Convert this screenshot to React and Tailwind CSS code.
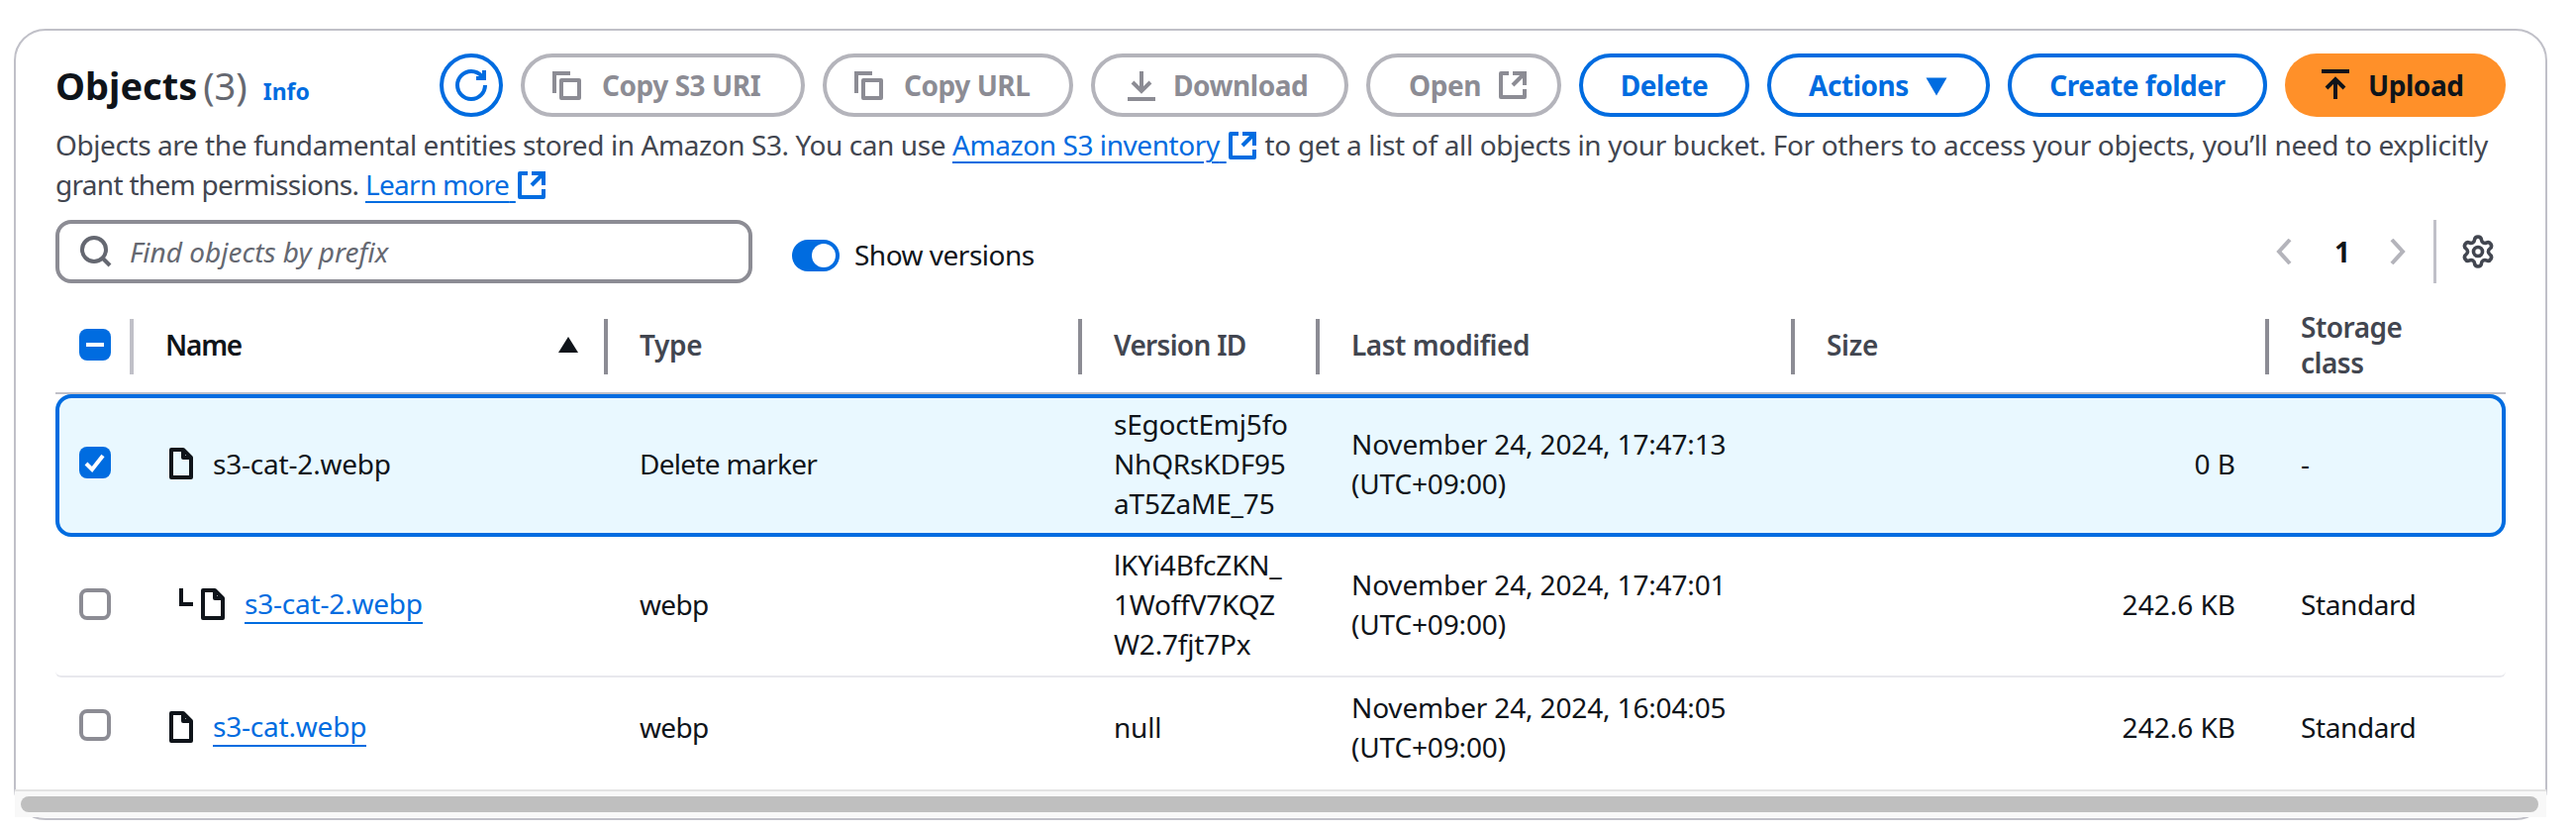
import { Settings } from "lucide-react";

const columns = "grid grid-cols-[75px_479px_479px_240px_480px_479px_244px]";

const Icon = ({ children, className = "" }) => (
  <svg
    viewBox="0 0 16 16"
    fill="none"
    stroke="currentColor"
    strokeWidth="2"
    className={`h-8 w-8 shrink-0 ${className}`}
  >
    {children}
  </svg>
);

const CopyIcon = (props) => (
  <Icon {...props}>
    <path d="M2 12V2h8" />
    <path d="M5.5 5.5h9v9h-9z" strokeLinejoin="round" />
  </Icon>
);

const ExternalIcon = (props) => (
  <Icon {...props}>
    <path d="M14 8V2H8" />
    <path d="M14 2 8 8" />
    <path d="M6 2H2v12h12v-4" strokeLinejoin="round" />
  </Icon>
);

const FileIcon = (props) => (
  <Icon {...props}>
    <path d="M9 1H3v14h10V5L9 1Z" strokeLinejoin="round" />
    <path d="M9 1v4h4" strokeLinejoin="round" />
  </Icon>
);

const Button = ({ children, disabled, className = "" }) => (
  <button
    className={`flex h-16 items-center rounded-full border-4 bg-white text-[28px] leading-10 font-bold tracking-[-0.45px] ${
      disabled
        ? "border-[#b4b4bb] text-[#8c8c94]"
        : "border-[#006ce0] text-[#006ce0]"
    } ${className}`}
  >
    {children}
  </button>
);

const Checkbox = ({ state, className = "" }) => {
  if (state === "empty") {
    return (
      <div
        className={`h-8 w-8 rounded-lg border-4 border-[#8c8c94] bg-white ${className}`}
      />
    );
  }

  return (
    <div
      className={`flex h-8 w-8 items-center justify-center rounded-lg bg-[#006ce0] ${className}`}
    >
      {state === "mixed" ? (
        <div className="h-1 w-[18px] bg-white" />
      ) : (
        <svg viewBox="0 0 16 16" className="h-8 w-8" fill="none" stroke="white" strokeWidth="2">
          <path d="M3.5 8.5 6.5 11.5 12 4.5" />
        </svg>
      )}
    </div>
  );
};

const HeaderCell = ({ children, className = "tracking-[-0.3px]" }) => (
  <div className="flex items-center">
    <div className="h-14 w-1 shrink-0 bg-[#8c8c94]" />
    <div className={`flex-1 pb-1 pl-8 text-[28px] leading-9 font-semibold text-[#424650] ${className}`}>
      {children}
    </div>
  </div>
);

const Row = ({ row, className = "", bodyClass = "pb-1" }) => (
  <div className={`${columns} text-[28px] leading-10 text-[#0f141a] ${className}`}>
    <div className="pl-6">
      <Checkbox state={row.checked ? "checked" : "empty"} className={row.checkOffset} />
    </div>
    <div className={`flex items-center pl-9 tracking-[-0.2px] ${bodyClass}`}>
      {row.nested && (
        <svg viewBox="0 0 14 18" className="mb-3.5 ml-3.5 mr-1 h-[18px] w-[14px] shrink-0" fill="none" stroke="currentColor" strokeWidth="4">
          <path d="M2 0v16h12" />
        </svg>
      )}
      <FileIcon />
      {row.link ? (
        <a className="ml-4 border-b-2 border-[#006ce0] leading-[38px] text-[#006ce0]">{row.name}</a>
      ) : (
        <span className="ml-4">{row.name}</span>
      )}
    </div>
    <div className={`flex items-center pl-9 tracking-[-0.7px] ${bodyClass}`}>{row.type}</div>
    <div className={`flex items-center pl-9 tracking-[-0.2px] ${bodyClass}`}>
      <div>
        {row.version.map((line) => (
          <div key={line}>{line}</div>
        ))}
      </div>
    </div>
    <div className={`flex items-center pl-9 tracking-[-0.15px] ${bodyClass}`}>
      <div>
        {row.modified}
        <br />
        (UTC+09:00)
      </div>
    </div>
    <div className={`flex items-center justify-end pr-[30px] ${bodyClass}`}>{row.size}</div>
    <div className={`flex items-center pl-9 tracking-[-0.4px] ${bodyClass}`}>{row.storage}</div>
  </div>
);

const rows = [
  {
    name: "s3-cat-2.webp",
    checked: true,
    checkOffset: "mt-[53px]",
    type: "Delete marker",
    version: ["sEgoctEmj5fo", "NhQRsKDF95", "aT5ZaME_75"],
    modified: "November 24, 2024, 17:47:13",
    size: "0 B",
    storage: "-",
  },
  {
    name: "s3-cat-2.webp",
    link: true,
    nested: true,
    checkOffset: "mt-[52px]",
    type: "webp",
    version: ["lKYi4BfcZKN_", "1WoffV7KQZ", "W2.7fjt7Px"],
    modified: "November 24, 2024, 17:47:01",
    size: "242.6 KB",
    storage: "Standard",
  },
  {
    name: "s3-cat.webp",
    link: true,
    checkOffset: "mt-8",
    type: "webp",
    version: ["null"],
    modified: "November 24, 2024, 16:04:05",
    size: "242.6 KB",
    storage: "Standard",
  },
];

export default function App() {
  return (
    <div className="min-h-[840px] bg-white pt-[29px] pl-[14px] pr-[29px] font-['Noto_Sans',sans-serif]">
      <div className="relative h-[799px] rounded-[32px] border-2 border-[#c0c0c8] px-10 pt-[23px]">
        <div className="flex items-center justify-between">
          <div className="flex items-baseline">
            <h1 className="text-[38px] leading-[48px] font-bold text-[#0f141a]">
              Objects <span className="-ml-1 font-normal text-[#656871]">(3)</span>
            </h1>
            <a className="ml-4 text-[23px] font-bold text-[#006ce0]">Info</a>
          </div>
          <div className="flex items-center gap-[18px]">
            <button className="flex h-16 w-16 items-center justify-center rounded-full border-4 border-[#006ce0] text-[#006ce0]">
              <Icon>
                <path d="M15 8c0 3.87-3.13 7-7 7s-7-3.13-7-7 3.13-7 7-7c2.22 0 4.2 1.03 5.48 2.64" />
                <path d="M14.5.5v4H10.5" />
              </Icon>
            </button>
            <Button disabled className="w-[287px] pl-[26px]">
              <CopyIcon className="mr-5" />
              Copy S3 URI
            </Button>
            <Button disabled className="w-[253px] pl-[26px]">
              <CopyIcon className="mr-5" />
              Copy URL
            </Button>
            <Button disabled className="w-[260px] pl-[31px]">
              <Icon className="mr-4">
                <path d="M8 1v10" />
                <path d="M3.5 6.5 8 11l4.5-4.5" />
                <path d="M1 15h14" />
              </Icon>
              Download
            </Button>
            <Button disabled className="w-[197px] pl-[39px]">
              Open
              <ExternalIcon className="ml-4" />
            </Button>
            <Button className="w-[172px] justify-center">Delete</Button>
            <Button className="w-[225px] justify-center">
              Actions
              <svg viewBox="0 0 16 16" className="ml-4 h-6 w-6" fill="currentColor">
                <path d="M1 3h14L8 15Z" />
              </svg>
            </Button>
            <Button className="w-[262px] justify-center">Create folder</Button>
            <button className="flex h-16 w-[223px] items-center rounded-full bg-[#ff9029] pl-[35px] text-[28px] leading-10 font-bold tracking-[-0.45px] text-[#0f141a]">
              <Icon className="mr-[17px]">
                <path d="M1 1h14" />
                <path d="M8 15V5" />
                <path d="M3.5 9.5 8 5l4.5 4.5" />
              </Icon>
              Upload
            </button>
          </div>
        </div>

        <p className="mt-2 text-[28px] leading-10 tracking-[-0.42px] text-[#424650]">
          Objects are the fundamental entities stored in Amazon S3. You can use{" "}
          <a className="text-[#006ce0] underline decoration-2 underline-offset-[6px]">
            Amazon S3 inventory{" "}
          </a>
          <ExternalIcon className="inline-block align-[-6px] text-[#006ce0]" />{" "}
          <span className="tracking-[-0.34px]">
            to get a list of all objects in your bucket. For others to access your objects, you’ll
            need to explicitly
          </span>{" "}
          <span className="tracking-[-0.7px]">grant them permissions. </span>
          <a className="tracking-[-0.7px] text-[#006ce0] underline decoration-2 underline-offset-[6px]">
            Learn more{" "}
          </a>
          <ExternalIcon className="inline-block align-[-6px] text-[#006ce0]" />
        </p>

        <div className="mt-4 flex items-center justify-between">
          <div className="flex items-center">
            <div className="flex h-16 w-[704px] items-center rounded-2xl border-4 border-[#8c8c94] bg-white pl-[21px]">
              <svg viewBox="0 0 16 16" className="h-8 w-8" fill="none" stroke="#656871" strokeWidth="2">
                <circle cx="7" cy="7" r="6" />
                <path d="m11.5 11.5 3.5 3.5" />
              </svg>
              <span className="ml-[18px] text-[28px] text-[#656871] italic">
                Find objects by prefix
              </span>
            </div>
            <div className="mt-2 ml-10 flex items-center">
              <div className="flex h-8 w-12 items-center justify-end rounded-full bg-[#006ce0] pr-1">
                <div className="h-6 w-6 rounded-full bg-white" />
              </div>
              <span className="ml-[15px] pb-0.5 text-[28px] leading-10 tracking-[-0.5px] text-[#0f141a]">
                Show versions
              </span>
            </div>
          </div>
          <div className="flex items-center pr-2.5">
            <svg viewBox="0 0 16 26" className="h-[26px] w-4" fill="none" stroke="#b4b4bb" strokeWidth="4">
              <path d="M14 1 3 13l11 12" />
            </svg>
            <span className="ml-[43px] mr-10 text-[28px] font-bold text-[#0f141a]">1</span>
            <svg viewBox="0 0 16 26" className="h-[26px] w-4" fill="none" stroke="#b4b4bb" strokeWidth="4">
              <path d="M2 1l11 12L2 25" />
            </svg>
            <div className="ml-7 h-16 w-[3px] bg-[#c0c0c8]" />
            <Settings className="ml-6 h-9 w-9 text-[#424650]" strokeWidth={2.4} />
          </div>
        </div>

        <div className={`${columns} mt-4 h-24 border-b-2 border-[#c0c0c8] pt-0.5`}>
          <div className="flex items-center pl-6">
            <Checkbox state="mixed" className="-mt-1" />
          </div>
          <div className="flex items-center">
            <div className="h-14 w-1 shrink-0 bg-[#c0c0c8]" />
            <div className="flex flex-1 items-center justify-between pb-1 pl-8 pr-[26px] text-[28px] leading-9 font-semibold tracking-[-1.2px] text-[#0f141a]">
              Name
              <svg viewBox="0 0 20 16" className="h-4 w-5" fill="#0f141a">
                <path d="M10 0 20 16H0Z" />
              </svg>
            </div>
          </div>
          <HeaderCell>Type</HeaderCell>
          <HeaderCell className="tracking-[-0.7px]">Version ID</HeaderCell>
          <HeaderCell className="tracking-[-0.45px]">Last modified</HeaderCell>
          <HeaderCell>Size</HeaderCell>
          <HeaderCell className="tracking-[-0.5px]">
            Storage
            <br />
            class
          </HeaderCell>
        </div>

        <Row row={rows[0]} className="h-36 rounded-2xl bg-[#e9f8ff] shadow-[inset_0_0_0_4px_#006ce0]" />
        <Row row={rows[1]} className="h-[142px] rounded-b-md border-b-2 border-[#e8e8ed]" />
        <Row row={rows[2]} className="h-[113px]" bodyClass="pb-[14px]" />

        <div className="absolute -left-px -right-px bottom-px h-7 border-t-2 border-[#e3e3e3] bg-[#f8f8f8] pt-[5px] pl-1.5 pr-2">
          <div className="h-4 rounded-full bg-[#bfbfbf]" />
        </div>
      </div>
    </div>
  );
}
